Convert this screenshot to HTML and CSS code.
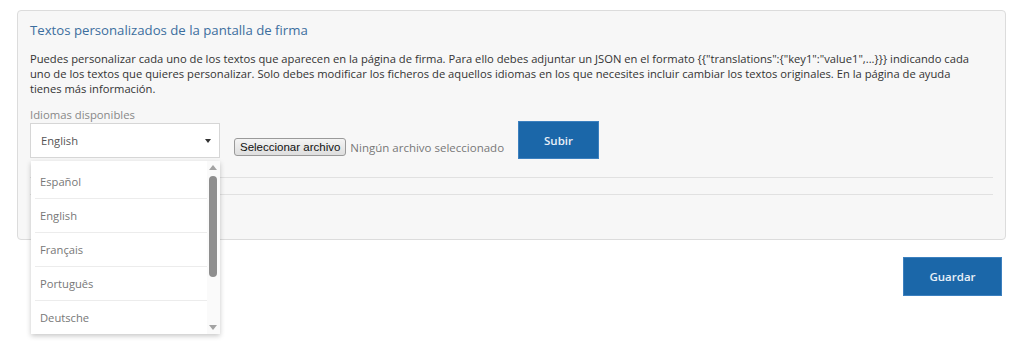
FILE: index.html
```html
<!DOCTYPE html>
<html lang="es">
<head>
<meta charset="utf-8">
<title>Textos personalizados</title>
<link rel="stylesheet" href="styles.css">
</head>
<body>
<div class="page">
  <section class="panel">
    <h2 class="panel-title">Textos personalizados de la pantalla de firma</h2>
    <p class="panel-text">Puedes personalizar cada uno de los textos que aparecen en la página de firma. Para ello debes adjuntar un JSON en el formato {{"translations":{"key1":"value1",...}}} indicando cada uno de los textos que quieres personalizar. Solo debes modificar los ficheros de aquellos idiomas en los que necesites incluir cambiar los textos originales. En la página de ayuda tienes más información.</p>
    <div class="form-row">
      <div class="field">
        <label class="field-label">Idiomas disponibles</label>
        <div class="select">
          <span class="select-value">English</span>
          <span class="caret"></span>
        </div>
        <div class="dropdown">
          <ul class="options">
            <li class="option">Español</li>
            <li class="option">English</li>
            <li class="option">Français</li>
            <li class="option">Português</li>
            <li class="option">Deutsche</li>
          </ul>
          <div class="scrollbar">
            <span class="arrow-up"></span>
            <span class="thumb"></span>
            <span class="arrow-down"></span>
          </div>
        </div>
      </div>
      <div class="file">
        <button class="file-btn" type="button">Seleccionar archivo</button>
        <span class="file-name">Ningún archivo seleccionado</span>
      </div>
      <button class="btn btn-upload" type="button">Subir</button>
    </div>
    <div class="rule rule-first"></div>
    <div class="rule rule-second"></div>
  </section>
  <div class="actions">
    <button class="btn btn-save" type="button">Guardar</button>
  </div>
</div>
</body>
</html>
```

FILE: styles.css
```css
* { box-sizing: border-box; }
html, body { margin: 0; padding: 0; background: #fff; }
body {
  font-family: "Open Sans", "Noto Sans", sans-serif;
  color: #333;
  width: 1024px;
  height: 359px;
  overflow: hidden;
}
.page { padding: 10px 18px 0 17px; }
.panel {
  width: 989px;
  height: 230px;
  background: #f7f7f7;
  border: 1px solid #dcdcdc;
  border-radius: 4px;
  padding: 9px 12px 0 12px;
}
.panel-title {
  margin: 0;
  font-size: 13.2px;
  line-height: 20px;
  font-weight: 400;
  color: #3c6e9e;
}
.panel-text {
  margin: 11px 0 0 0;
  max-width: 945px;
  font-size: 11.2px;
  line-height: 15px;
  color: #333;
}
.form-row {
  display: flex;
  align-items: flex-start;
  margin-top: 11px;
}
.field { position: relative; width: 190px; }
.field-label {
  display: block;
  font-size: 11.3px;
  line-height: 15px;
  color: #888;
}
.select {
  margin-top: 1px;
  height: 35px;
  background: #fff;
  border: 1px solid #d6d6d6;
  display: flex;
  align-items: center;
  justify-content: space-between;
  padding: 0 8px 0 10px;
}
.select-value { font-size: 11.2px; color: #555; }
.caret {
  width: 0; height: 0;
  border-left: 3.5px solid transparent;
  border-right: 3.5px solid transparent;
  border-top: 4px solid #333;
  margin-top: 1px;
}
.dropdown {
  position: absolute;
  left: 1px;
  top: 54px;
  width: 189px;
  height: 173px;
  background: #fff;
  box-shadow: 0 2px 5px rgba(0,0,0,0.22);
  display: flex;
  z-index: 5;
}
.options {
  list-style: none;
  margin: 0;
  padding: 4px 0 0 4px;
  width: 176px;
}
.option {
  height: 34px;
  line-height: 33px;
  padding-left: 5px;
  font-size: 11.2px;
  color: #777;
  border-bottom: 1px solid #ececec;
}
.option:last-child { border-bottom: none; }
.scrollbar {
  position: relative;
  width: 13px;
  height: 100%;
  background: #fafafa;
}
.arrow-up, .arrow-down {
  position: absolute;
  left: 2px;
  width: 0; height: 0;
  border-left: 4px solid transparent;
  border-right: 4px solid transparent;
}
.arrow-up { top: 4px; border-bottom: 5px solid #a3a3a3; }
.arrow-down { bottom: 4px; border-top: 5px solid #a3a3a3; }
.thumb {
  position: absolute;
  left: 2px;
  top: 15px;
  width: 8px;
  height: 101px;
  border-radius: 4px;
  background: #8e8e8e;
}
.file {
  display: flex;
  align-items: center;
  margin: 31px 0 0 14px;
  width: 284px;
}
.file-btn {
  height: 18px;
  padding: 0 5px;
  font-family: "Liberation Sans", Arial, sans-serif;
  font-size: 11.5px;
  color: #111;
  background: linear-gradient(#f4f4f4, #dedede);
  border: 1px solid #9a9a9a;
  border-radius: 3px;
}
.file-name {
  margin-left: 4px;
  font-size: 11.5px;
  color: #777;
}
.btn {
  background: #1b67a9;
  border: 1px solid #3c80bf;
  color: #e8f0f8;
  font-family: "Open Sans", "Noto Sans", sans-serif;
  font-size: 11.5px;
  font-weight: 600;
}
.btn-upload {
  width: 81px;
  height: 38px;
  margin: 14px 0 0 0;
}
.rule { height: 1px; background: #e1e1e1; }
.rule-first { margin-top: 18px; }
.rule-second { margin-top: 16px; }
.actions {
  display: flex;
  justify-content: flex-end;
  margin-top: 17px;
  padding-right: 4px;
}
.btn-save { width: 99px; height: 39px; }
```
